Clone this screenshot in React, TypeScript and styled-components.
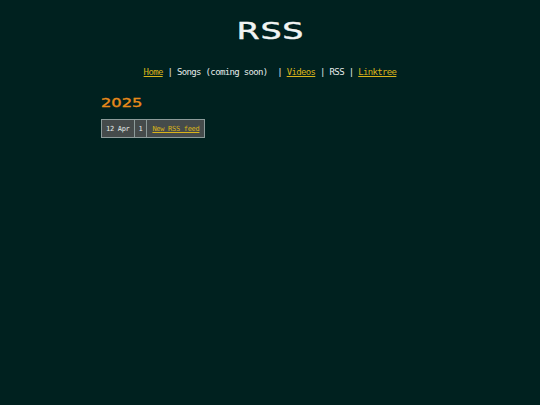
import React from "react"
import styled, { createGlobalStyle } from "styled-components"

const GlobalStyle = createGlobalStyle`
  html, body {
    margin: 0;
    padding: 0;
    background-color: #00211f;
    min-height: 100%;
  }
  body {
    font-family: "DejaVu Sans Mono", "Liberation Mono", monospace;
    color: #e6ecea;
  }
`

const SPage = styled.div`
  width: 540px;
  height: 405px;
  background-color: #00211f;
  display: flex;
  flex-direction: column;
  align-items: center;
`

const STitle = styled.h1`
  margin: 17px 0 0 0;
  font-family: "DejaVu Sans", "Liberation Sans", sans-serif;
  font-weight: 400;
  font-size: 23px;
  line-height: 28px;
  color: #f2f4f3;
  transform: scaleX(1.45);
  letter-spacing: 0.5px;
  -webkit-text-stroke: 0.4px #f2f4f3;
`

const SNav = styled.nav`
  margin-top: 21px;
  font-size: 9px;
  letter-spacing: -0.65px;
  line-height: 12px;
  color: #e6ecea;
  white-space: pre;
`

const SLink = styled.a`
  color: #d9b41a;
  text-decoration: underline;
  text-underline-offset: 1px;
`

const SContent = styled.main`
  width: 338px;
  margin-top: 18px;
  display: flex;
  flex-direction: column;
  gap: 9px;
`

const SYear = styled.h2`
  margin: 0;
  font-family: "DejaVu Sans", "Liberation Sans", sans-serif;
  font-weight: 400;
  font-size: 13px;
  line-height: 14px;
  color: #e88a1a;
  transform: scaleX(1.25);
  transform-origin: left center;
  -webkit-text-stroke: 0.4px #e88a1a;
`

const STable = styled.table`
  border-collapse: collapse;
  font-size: 7px;
  letter-spacing: -0.3px;
  align-self: flex-start;
`

const SCell = styled.td`
  background-color: #454b4b;
  border: 1px solid #8c9b9a;
  padding: 0 4px;
  height: 17px;
  color: #e6ecea;
  white-space: nowrap;

  &.wide {
    padding: 0 5px;
  }
`

const App = () => {
  return (
    <>
      <GlobalStyle />
      <SPage>
        <STitle>RSS</STitle>
        <SNav>
          <SLink href="#">Home</SLink>
          {" | Songs (coming soon)  | "}
          <SLink href="#">Videos</SLink>
          {" | RSS | "}
          <SLink href="#">Linktree</SLink>
        </SNav>
        <SContent>
          <SYear>2025</SYear>
          <STable>
            <tbody>
              <tr>
                <SCell>12 Apr</SCell>
                <SCell>1</SCell>
                <SCell className="wide">
                  <SLink href="#">New RSS feed</SLink>
                </SCell>
              </tr>
            </tbody>
          </STable>
        </SContent>
      </SPage>
    </>
  )
}

export default App
